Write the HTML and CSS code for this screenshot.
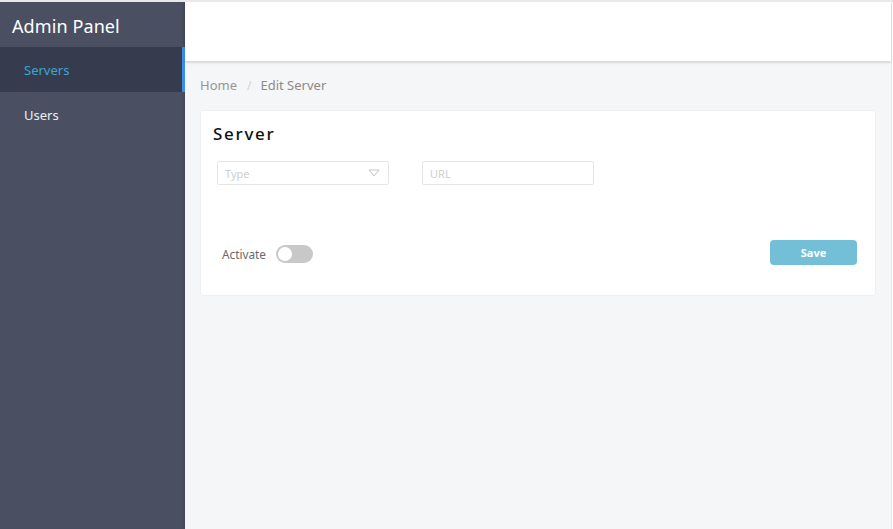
FILE: index.html
```html
<!DOCTYPE html>
<html>
<head>
<meta charset="utf-8">
<link rel="stylesheet" href="styles.css">
</head>
<body>
<div class="app">
  <aside class="sidebar">
    <div class="brand">Admin Panel</div>
    <nav class="nav">
      <div class="nav-item active">Servers</div>
      <div class="nav-item">Users</div>
    </nav>
  </aside>
  <main class="main">
    <header class="topbar"></header>
    <div class="content">
      <div class="breadcrumb"><span class="crumb">Home</span><span class="sep">/</span><span class="crumb current">Edit Server</span></div>
      <section class="card">
        <h1 class="card-title">Server</h1>
        <div class="fields">
          <div class="field select"><span class="ph">Type</span>
            <svg class="caret" width="12" height="8" viewBox="0 0 12 8"><path d="M1 1 L11 1 L6 7 Z" fill="none" stroke="#c4c4c4" stroke-width="1"/></svg>
          </div>
          <div class="field"><span class="ph">URL</span></div>
        </div>
        <div class="actions">
          <div class="activate"><span class="label">Activate</span><span class="toggle"><span class="knob"></span></span></div>
          <button class="save">Save</button>
        </div>
      </section>
    </div>
  </main>
  <div class="edge"></div>
</div>
</body>
</html>
```
FILE: styles.css
```css
html, body { margin: 0; padding: 0; }
body {
  font-family: "Noto Sans", "Open Sans", sans-serif;
  background: #f5f6f8;
  border-top: 2px solid #e9e9e9;
  height: 527px;
  overflow: hidden;
}
.app { display: flex; height: 527px; }
.sidebar {
  width: 185px;
  flex: none;
  background: #4a5061;
  box-shadow: inset -3px 0 3px -2px rgba(0,0,0,0.15);
}
.brand {
  height: 45px;
  display: flex;
  align-items: center;
  padding-left: 12px;
  padding-top: 2px;
  box-sizing: border-box;
  color: #ffffff;
  font-size: 18px;
  letter-spacing: 0.1px;
}
.nav-item {
  height: 45px;
  display: flex;
  align-items: center;
  padding-left: 24px;
  color: #eceef2;
  font-size: 13px;
}
.nav-item.active {
  background: #363c4e;
  color: #3aa6d4;
  box-shadow: inset -3px 0 0 #3b8de8;
}
.main { flex: 1; display: flex; flex-direction: column; }
.edge { width: 1px; flex: none; background: #ffffff; border-left: 1px solid #e6e6e6; }
.topbar {
  height: 59px;
  background: #ffffff;
  box-shadow: 0 2px 2px rgba(0,0,0,0.13);
  position: relative;
  z-index: 1;
}
.content { padding: 15px 15px 0 15px; }
.breadcrumb {
  height: 18px;
  display: flex;
  align-items: center;
  font-size: 13px;
  color: #9a9a9a;
  margin-bottom: 16px;
}
.crumb { color: #999592; }
.crumb.current { color: #8f8985; }
.sep { color: #d3d3d3; margin: 0 9px 0 10px; font-size: 12px; }
.card {
  background: #ffffff;
  border: 1px solid #eef0f2;
  border-radius: 3px;
  padding: 0 18px 0 12px;
  box-sizing: border-box;
  height: 186px;
}
.card-title {
  margin: 0;
  padding-top: 11px;
  font-size: 17px;
  font-weight: 500;
  letter-spacing: 1.7px;
  color: #111111;
  line-height: 24px;
}
.fields {
  display: flex;
  gap: 33px;
  margin-top: 15px;
  padding-left: 4px;
}
.field {
  width: 172px;
  height: 24px;
  box-sizing: border-box;
  border: 1px solid #e6e6e6;
  border-radius: 2px;
  display: flex;
  align-items: center;
  justify-content: space-between;
  padding: 0 8px 0 7px;
}
.ph { font-size: 11px; color: #cfcfcf; }
.caret { display: block; }
.actions {
  display: flex;
  align-items: center;
  justify-content: space-between;
  margin-top: 57px;
  padding-left: 9px;
}
.activate { display: flex; align-items: center; gap: 10px; margin-top: 1px; }
.label { font-size: 11.8px; color: #6d6969; }
.toggle {
  width: 37px;
  height: 18px;
  border-radius: 9px;
  background: #c8c8c8;
  position: relative;
  display: block;
}
.knob {
  position: absolute;
  left: 2px;
  top: 2px;
  width: 14px;
  height: 14px;
  border-radius: 50%;
  background: #ffffff;
}
.save {
  width: 87px;
  height: 25px;
  border: none;
  border-radius: 4px;
  background: #73bfd7;
  color: #ffffff;
  font-family: "Noto Sans", sans-serif;
  font-weight: 700;
  font-size: 11px;
  margin-top: -2px;
}
```
